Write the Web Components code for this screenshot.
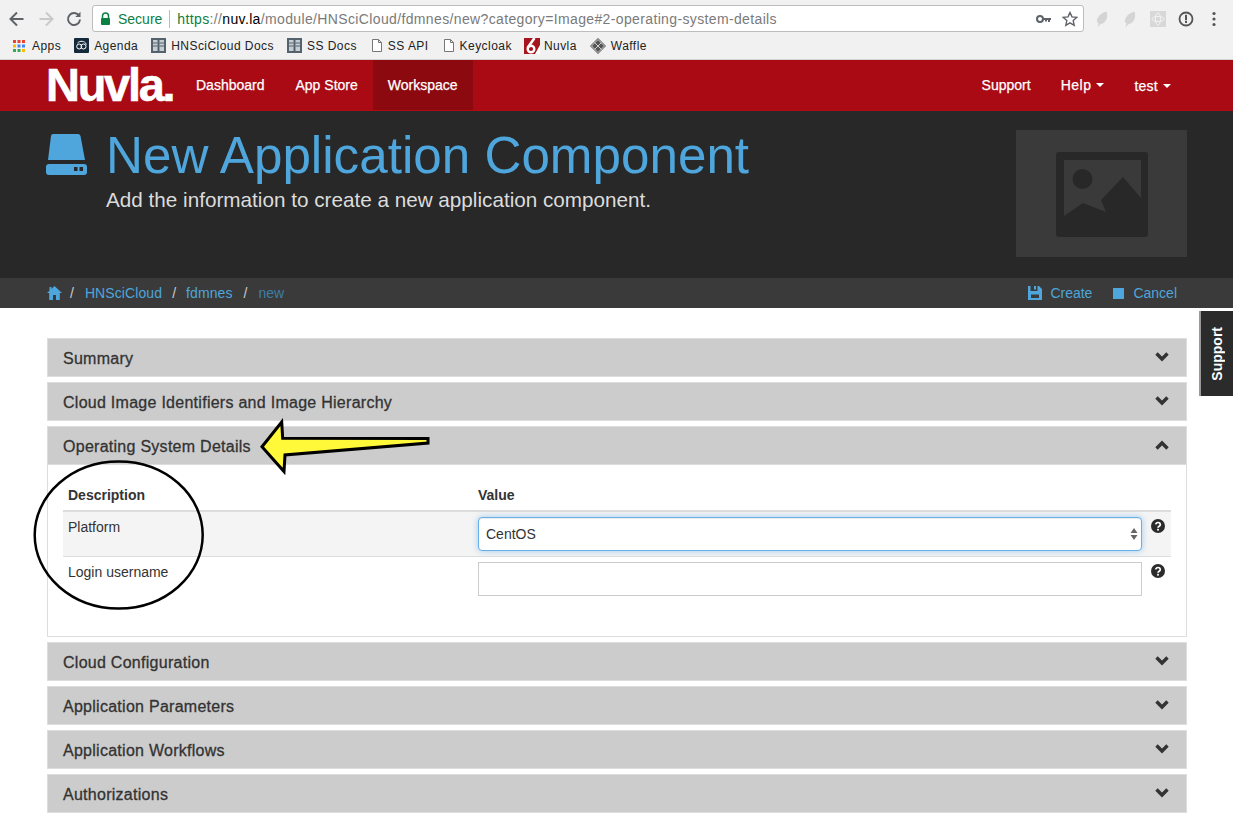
<!DOCTYPE html>
<html lang="en">
<head>
<meta charset="utf-8">
<title>New Application Component</title>
<style>
  html, body { margin: 0; padding: 0; background: #fff; }
  body { width: 1233px; height: 822px; overflow: hidden; position: relative; font-family: "Liberation Sans", Arial, sans-serif; }
</style>
</head>
<body>
<browser-toolbar></browser-toolbar>
<bookmarks-bar>
  <book-mark icon="apps" gap="13">Apps</book-mark>
  <book-mark icon="agenda" gap="13">Agenda</book-mark>
  <book-mark icon="docs" gap="13">HNSciCloud Docs</book-mark>
  <book-mark icon="docs" gap="15">SS Docs</book-mark>
  <book-mark icon="page" gap="15">SS API</book-mark>
  <book-mark icon="page" gap="12">Keycloak</book-mark>
  <book-mark icon="nuvla" gap="13">Nuvla</book-mark>
  <book-mark icon="waffle" gap="0">Waffle</book-mark>
</bookmarks-bar>
<nuvla-nav></nuvla-nav>
<page-header></page-header>
<crumb-bar></crumb-bar>
<panel-list>
  <acc-panel label="Summary"></acc-panel>
  <acc-panel label="Cloud Image Identifiers and Image Hierarchy"></acc-panel>
  <acc-panel label="Operating System Details" open>
    <param-table>
      <param-row label="Platform" kind="select" shaded></param-row>
      <param-row label="Login username" kind="input"></param-row>
    </param-table>
  </acc-panel>
  <acc-panel label="Cloud Configuration"></acc-panel>
  <acc-panel label="Application Parameters"></acc-panel>
  <acc-panel label="Application Workflows"></acc-panel>
  <acc-panel label="Authorizations"></acc-panel>
</panel-list>
<support-tab></support-tab>
<note-overlay></note-overlay>

<script>
const FONT = '"Liberation Sans", Arial, sans-serif'

const LEAF = '<svg width="18" height="18" viewBox="0 0 18 18"><path d="M13.500 1.500c1.500 4.500.5 9-3 11.500L7 14.500l-2.500 3 1-4c-2-1-2-3-1-5 1.500-3.500 5-6 9-7z" fill="#d4d4d4"/></svg>'

class BrowserToolbar extends HTMLElement {
  connectedCallback() {
    this.attachShadow({ mode: 'open' }).innerHTML = `
      <style>
        :host { display: flex; align-items: center; height: 32px; background: #f1f1f1; box-sizing: border-box; padding: 5px 0 0 0; font-family: ${FONT}; }
        svg { display: block; flex: none; }
        .nav { display: flex; gap: 8.500px; padding-left: 7px; width: 92px; box-sizing: border-box; }
        .url { display: flex; align-items: center; width: 992px; height: 27px; background: #fff; border: 1px solid #bdbdbd; border-radius: 3px; box-sizing: border-box; font-size: 14px; white-space: nowrap; }
        .lock { margin-left: 7px; }
        .sec { color: #0b8043; margin-left: 7px; }
        .sep { width: 1px; height: 18px; background: #bbb; margin: 0 7px 0 7px; }
        .addr { flex: 1; color: #7a7a7a; letter-spacing: .36px; }
        .addr b { font-weight: normal; color: #0b8043; }
        .addr i { font-style: normal; color: #000; }
        .right { display: flex; align-items: center; margin-left: 9px; gap: 10px; }
      </style>
      <div class="nav">
        <svg width="20" height="20" viewBox="0 0 20 20"><path d="M16.500 10H4M10 3.500 3.500 10l6.500 6.500" fill="none" stroke="#5f6368" stroke-width="2"/></svg>
        <svg width="20" height="20" viewBox="0 0 20 20"><path d="M3.500 10H16M10 3.500l6.500 6.500-6.500 6.500" fill="none" stroke="#c9c9c9" stroke-width="2"/></svg>
        <svg width="20" height="20" viewBox="0 0 20 20"><path d="M15.200 7A6 6 0 1 0 16 10.500" fill="none" stroke="#5f6368" stroke-width="2"/><path d="M16.500 2.800V8h-5.200z" fill="#5f6368"/></svg>
      </div>
      <div class="url">
        <svg class="lock" width="11" height="14" viewBox="0 0 11 14"><path d="M2.500 6V4a3 3 0 0 1 6 0v2" fill="none" stroke="#0b8043" stroke-width="1.500"/><rect x="1" y="6" width="9" height="7" rx="1" fill="#0b8043"/></svg>
        <span class="sec">Secure</span><span class="sep"></span>
        <span class="addr"><b>https</b>://<i>nuv.la</i>/module/HNSciCloud/fdmnes/new?category=Image#2-operating-system-details</span>
        <svg width="16" height="10" viewBox="0 0 16 10"><circle cx="4" cy="5" r="3" fill="none" stroke="#5f6368" stroke-width="2"/><path d="M7 4h8v2h-1v2h-2V6h-1v1.500H9V6H7z" fill="#5f6368"/></svg>
        <svg style="margin:0 5px 0 10px" width="16" height="16" viewBox="0 0 16 16"><path d="M8 1.500l2 4.400 4.700.5-3.500 3.200 1 4.700L8 11.900l-4.200 2.400 1-4.700L1.300 6.400 6 5.900z" fill="none" stroke="#5f6368" stroke-width="1.400"/></svg>
      </div>
      <div class="right">
        ${LEAF}${LEAF}
        <svg width="18" height="18" viewBox="0 0 18 18"><rect x="1" y="1" width="16" height="16" fill="#d8d8d8"/><ellipse cx="9" cy="9" rx="6" ry="2.500" fill="none" stroke="#f3f3f3"/><ellipse cx="9" cy="9" rx="2.500" ry="6" fill="none" stroke="#f3f3f3"/></svg>
        <svg width="18" height="18" viewBox="0 0 18 18"><circle cx="9" cy="9" r="6.500" fill="none" stroke="#555" stroke-width="1.800"/><rect x="8" y="4.800" width="2" height="5.500" fill="#555"/><rect x="8" y="11" width="2" height="2" fill="#555"/></svg>
        <svg width="18" height="18" viewBox="0 0 18 18"><circle cx="9" cy="3.500" r="1.600" fill="#555"/><circle cx="9" cy="9" r="1.600" fill="#555"/><circle cx="9" cy="14.500" r="1.600" fill="#555"/></svg>
      </div>`
  }
}

const APP_COLORS = [['#ea4335', '#ea4335', '#ea4335'], ['#fbbc05', '#4285f4', '#4285f4'], ['#34a853', '#34a853', '#fbbc05']]

const BOOK_ICONS = {
  apps: `<svg width="14" height="14" viewBox="0 0 14 14">${[1, 5.500, 10].map((y, r) => [1, 5.500, 10].map((x, c) => `<rect x="${x}" y="${y}" width="3" height="3" fill="${APP_COLORS[r][c]}"/>`).join('')).join('')}</svg>`,
  agenda: `<svg width="15" height="15" viewBox="0 0 15 15"><rect width="15" height="15" rx="1" fill="#14293a"/><circle cx="5.200" cy="8.500" r="2.500" fill="none" stroke="#fff"/><circle cx="9.500" cy="8.500" r="2.500" fill="none" stroke="#fff"/><path d="M3.500 5c2.500-2.500 7-2.500 9 1.500" fill="none" stroke="#fff"/></svg>`,
  docs: `<svg width="15" height="15" viewBox="0 0 15 15"><rect width="15" height="15" fill="#54626e"/><rect x="2" y="2" width="4.500" height="11" fill="#c5ccd2"/><rect x="8.500" y="2" width="4.500" height="11" fill="#c5ccd2"/><path d="M2 5h4.500M2 8h4.500M8.500 5H13M8.500 8H13" stroke="#54626e"/></svg>`,
  page: `<svg width="10" height="13" viewBox="0 0 10 13"><path d="M.5.500h6l3 3v9h-9zM6.500.500v3h3" fill="#fff" stroke="#777"/></svg>`,
  nuvla: `<svg width="16" height="16" viewBox="0 0 16 16"><rect width="16" height="16" fill="#a8141e"/><path d="M10.500 0 3.500 10" stroke="#fff" stroke-width="2.600"/><circle cx="7" cy="11" r="3.300" fill="none" stroke="#fff" stroke-width="2.400"/><path d="M16 7v9h-5z" fill="#fff"/></svg>`,
  waffle: `<svg width="16" height="16" viewBox="0 0 16 16"><path d="M8 0l8 8-8 8-8-8z" fill="#555"/><path d="M4.500 4.500l7 7M8 1.500l6.500 6.500M1.500 8 8 14.500M11.500 4.500l-7 7M8 1.500 1.500 8M14.500 8 8 14.500" stroke="#ddd" stroke-width=".9"/></svg>`
}

class BookmarksBar extends HTMLElement {
  connectedCallback() {
    this.attachShadow({ mode: 'open' }).innerHTML = `
      <style>
        :host { display: flex; align-items: center; height: 28px; background: #f1f1f1; border-bottom: 1px solid #d3d3d3; box-sizing: border-box; padding: 0 0 0 12px; }
      </style>
      <slot></slot>`
  }
}

class BookMark extends HTMLElement {
  connectedCallback() {
    const icon = this.getAttribute('icon')
    const gap = this.getAttribute('gap') || '0'
    const inner = icon === 'page' || icon === 'apps' ? 6 : icon === 'nuvla' ? 4 : 5
    this.attachShadow({ mode: 'open' }).innerHTML = `
      <style>
        :host { display: flex; align-items: center; gap: ${inner}px; margin-right: ${gap}px; font: 12px ${FONT}; letter-spacing: .45px; color: #222; white-space: nowrap; }
        svg { display: block; }
      </style>
      ${BOOK_ICONS[icon]}<span><slot></slot></span>`
  }
}

class NuvlaNav extends HTMLElement {
  connectedCallback() {
    const caret = '<span class="caret"></span>'
    this.attachShadow({ mode: 'open' }).innerHTML = `
      <style>
        :host { display: flex; height: 51px; background: #a90a14; box-sizing: border-box; border-bottom: 1px solid #b00a16; padding-left: 47px; font-family: ${FONT}; color: #fff; }
        .logo { width: 135px; text-indent: -1px; font-size: 47px; font-weight: bold; letter-spacing: -2.300px; line-height: 50px; -webkit-text-stroke: .6px #fff; white-space: nowrap; }
        a { display: flex; align-items: center; gap: 5px; padding: 0 15px; font-size: 14px; -webkit-text-stroke: .25px #fff; }
        a.first { padding: 0 16px 0 14px; }
        a.on { background: #8c0a0f; }
        .space { flex: 1; }
        .caret { width: 0; height: 0; border-left: 4px solid transparent; border-right: 4px solid transparent; border-top: 4px solid #fff; }
        .end { padding-right: 47px; display: flex; }
        .wide { letter-spacing: .5px; }
        .wide2 { letter-spacing: .25px; padding-top: 1px; }
      </style>
      <div class="logo">Nuvla.</div>
      <a class="first">Dashboard</a><a>App Store</a><a class="on">Workspace</a>
      <div class="space"></div>
      <div class="end"><a>Support</a><a class="wide">Help ${caret}</a><a class="wide2">test ${caret}</a></div>`
  }
}

class PageHeader extends HTMLElement {
  connectedCallback() {
    this.attachShadow({ mode: 'open' }).innerHTML = `
      <style>
        :host { display: flex; height: 167px; background: #282828; box-sizing: border-box; padding: 19px 46px 0 46px; font-family: ${FONT}; }
        .ico { width: 60px; flex: none; padding-top: 4px; }
        svg { display: block; }
        .txt { flex: 1; padding-top: 1px; }
        h1 { margin: 0; font-size: 51.200px; line-height: 50px; font-weight: normal; color: #4ea6dc; white-space: nowrap; }
        p { margin: 7px 0 0; font-size: 20.700px; line-height: 24px; color: #dcdcdc; white-space: nowrap; }
        .thumb { width: 171px; height: 127px; background: #3a3a3a; display: flex; align-items: center; justify-content: center; }
        .thumb svg { margin-top: 2px; }
      </style>
      <div class="ico">
        <svg width="41" height="41" viewBox="0 0 41 41"><path d="M7 0h25q2 0 2.500 2L39 26H2L5 2q.3-2 2-2z" fill="#4ea6dc"/><rect y="30" width="41" height="11" rx="3" fill="#4ea6dc"/><rect x="28" y="33" width="3.500" height="4" fill="#282828"/><rect x="33.500" y="33" width="3.500" height="4" fill="#282828"/></svg>
      </div>
      <div class="txt"><h1>New Application Component</h1><p>Add the information to create a new application component.</p></div>
      <div class="thumb">
        <svg width="92" height="85" viewBox="0 0 92 85"><rect width="92" height="85" rx="3" fill="#282828"/><path d="M8 8h77v38L67 25 45 48l5 12-23-9L8 64z" fill="#3a3a3a"/><circle cx="26.500" cy="27" r="10" fill="#282828"/></svg>
      </div>`
  }
}

class CrumbBar extends HTMLElement {
  connectedCallback() {
    this.attachShadow({ mode: 'open' }).innerHTML = `
      <style>
        :host { display: flex; align-items: center; height: 30px; background: #3a3a3a; box-sizing: border-box; padding: 0 56px 0 47px; font: 14px ${FONT}; color: #4ea6dc; white-space: nowrap; }
        svg { display: block; flex: none; }
        .s { color: #ccc; margin: 0 10px; }
        .s.first { margin: 0 11px 0 8px; }
        .s.last { margin: 0 11px 0 11px; }
        .t { letter-spacing: .1px; }
        .m { color: #3f7ea6; }
        .sp { flex: 1; }
        .act { display: flex; align-items: center; gap: 8px; margin-left: 21px; }
      </style>
      <svg width="15" height="14" viewBox="0 0 15 14"><path d="M7.500 0 15 7h-2.200v7H9V9H6v5H2.200V7H0l2.500-2.300V1h2v1.900z" fill="#4ea6dc"/></svg>
      <span class="s first">/</span><span class="t">HNSciCloud</span><span class="s">/</span><span class="t">fdmnes</span><span class="s last">/</span><span class="m">new</span>
      <div class="sp"></div>
      <div class="act"><svg width="14" height="14" viewBox="0 0 14 14"><path d="M0 0h2.500v5h7V0H11l3 3v11H0z" fill="#4ea6dc"/><rect x="6" y="0" width="2" height="3.500" fill="#4ea6dc"/><rect x="3" y="8.500" width="8" height="3.500" fill="#3a3a3a"/></svg>Create</div>
      <div class="act" style="gap:9px"><svg width="11" height="11" viewBox="0 0 11 11"><rect width="11" height="11" fill="#4ea6dc"/></svg>Cancel</div>`
  }
}

class PanelList extends HTMLElement {
  connectedCallback() {
    this.attachShadow({ mode: 'open' }).innerHTML = `
      <style>:host { display: flex; flex-direction: column; gap: 5px; padding: 30px 46px 0 47px; }</style>
      <slot></slot>`
  }
}

class AccPanel extends HTMLElement {
  connectedCallback() {
    const open = this.hasAttribute('open')
    this.attachShadow({ mode: 'open' }).innerHTML = `
      <style>
        :host { display: block; font-family: ${FONT}; }
        .head { display: flex; align-items: center; justify-content: space-between; height: 39px; background: #ccc; border: 1px solid #ddd; box-sizing: border-box; padding: 0 17px 0 15px; font-size: 16px; color: #333; -webkit-text-stroke: .3px #333; letter-spacing: .27px; }
        .head span { padding-top: 2px; }
        svg { display: block; margin-top: -1px; }
        .body { border: 1px solid #ddd; border-top: 0; padding: 15px 15px 0; height: 172px; box-sizing: border-box; }
      </style>
      <div class="head"><span>${this.getAttribute('label')}</span>
        <svg width="14" height="10" viewBox="0 0 14 10"><path d="${open ? 'M1.500 8.500 7 3l5.500 5.500' : 'M1.500 1.500 7 7l5.500-5.500'}" fill="none" stroke="#333" stroke-width="3.400"/></svg>
      </div>
      ${open ? '<div class="body"><slot></slot></div>' : ''}`
  }
}

class ParamTable extends HTMLElement {
  connectedCallback() {
    this.attachShadow({ mode: 'open' }).innerHTML = `
      <style>
        :host { display: block; font: 14px ${FONT}; color: #333; }
        .hd { display: grid; grid-template-columns: 415px 1fr; height: 32px; align-items: center; box-sizing: border-box; border-bottom: 2px solid #ddd; font-weight: bold; }
        .hd span { padding-left: 5px; }
      </style>
      <div class="hd"><span>Description</span><span style="padding-left:0">Value</span></div>
      <slot></slot>`
  }
}

class ParamRow extends HTMLElement {
  connectedCallback() {
    const isSelect = this.getAttribute('kind') === 'select'
    const shaded = this.hasAttribute('shaded')
    this.attachShadow({ mode: 'open' }).innerHTML = `
      <style>
        :host { display: grid; grid-template-columns: 415px 664px 1fr; height: 45px; box-sizing: border-box; padding-top: 5px; border-bottom: ${shaded ? '1px solid #ddd' : '0'}; background: ${shaded ? '#f4f4f4' : 'transparent'}; font: 14px ${FONT}; color: #333; }
        .lb { padding: 2px 0 0 5px; }
        .box { height: 34px; box-sizing: border-box; background: #fff; display: flex; align-items: center; justify-content: space-between; padding: 0 3px 0 7px; }
        .sel { border: 1px solid #66afe9; border-radius: 4px; box-shadow: inset 0 1px 1px rgba(0,0,0,.075), 0 0 6px rgba(102,175,233,.6); }
        .inp { border: 1px solid #ccc; }
        svg { display: block; }
        .help { padding: 2px 0 0 9px; }
      </style>
      <div class="lb">${this.getAttribute('label')}</div>
      <div class="box ${isSelect ? 'sel' : 'inp'}">
        ${isSelect ? '<span>CentOS</span><svg width="8" height="14" viewBox="0 0 8 14"><path d="M4 1l3.500 5h-7zM4 13l3.500-5h-7z" fill="#666"/></svg>' : ''}
      </div>
      <div class="help"><svg width="14" height="14" viewBox="0 0 14 14"><circle cx="7" cy="7" r="7" fill="#2b2b2b"/><path d="M4.700 5.300a2.300 2 0 1 1 3.500 1.900c-.8.500-1.200.8-1.200 1.600" fill="none" stroke="#fff" stroke-width="1.700"/><rect x="6.100" y="9.800" width="1.800" height="1.800" fill="#fff"/></svg></div>`
  }
}

class SupportTab extends HTMLElement {
  connectedCallback() {
    this.attachShadow({ mode: 'open' }).innerHTML = `
      <style>
        :host { position: absolute; left: 1199px; top: 311px; width: 34px; height: 85px; box-sizing: border-box; background: #2b2b2b; border-left: 2px solid #999; display: flex; align-items: center; justify-content: center; font: bold 14px ${FONT}; color: #fff; }
        span { writing-mode: vertical-rl; transform: rotate(180deg); }
      </style>
      <span>Support</span>`
  }
}

class NoteOverlay extends HTMLElement {
  connectedCallback() {
    this.attachShadow({ mode: 'open' }).innerHTML = `
      <style>
        :host { position: absolute; left: 0; top: 0; pointer-events: none; }
        svg { display: block; }
      </style>
      <svg width="1233" height="822" viewBox="0 0 1233 822">
        <ellipse cx="118.700" cy="535" rx="84" ry="73.500" fill="none" stroke="#000" stroke-width="2.500"/>
        <path d="M262 446.700 281.700 422l1 16.300L428 438.500v4.500L285 455l-1 16.500z" fill="#fff93a" stroke="#000" stroke-width="3" stroke-linejoin="miter"/>
      </svg>`
  }
}

customElements.define('browser-toolbar', BrowserToolbar)
customElements.define('bookmarks-bar', BookmarksBar)
customElements.define('book-mark', BookMark)
customElements.define('nuvla-nav', NuvlaNav)
customElements.define('page-header', PageHeader)
customElements.define('crumb-bar', CrumbBar)
customElements.define('panel-list', PanelList)
customElements.define('acc-panel', AccPanel)
customElements.define('param-table', ParamTable)
customElements.define('param-row', ParamRow)
customElements.define('support-tab', SupportTab)
customElements.define('note-overlay', NoteOverlay)
</script>
</body>
</html>
